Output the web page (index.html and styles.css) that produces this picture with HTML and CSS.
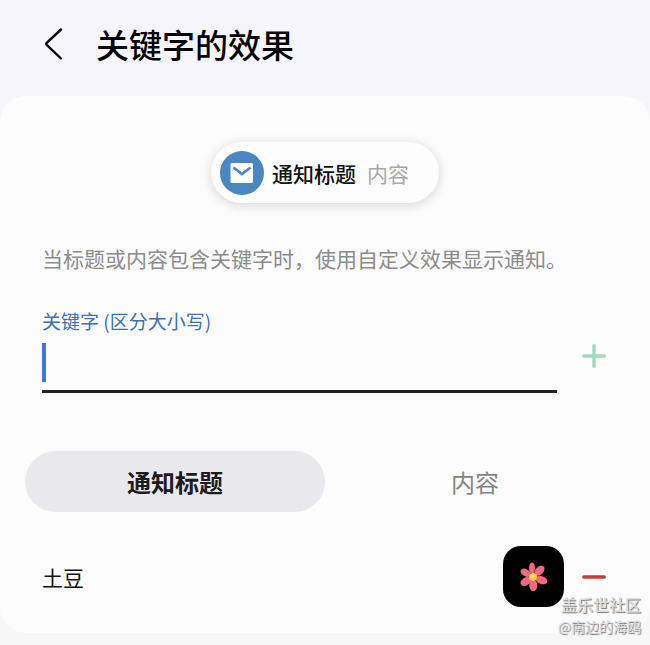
FILE: index.html
```html
<!DOCTYPE html>
<html lang="zh-CN">
<head>
    <meta charset="UTF-8">
    <meta name="viewport" content="width=device-width, initial-scale=1.0">
    <title>关键字的效果</title>
    <link rel="stylesheet" href="styles.css">
</head>
<body>
    <header class="header">
        <button class="back" type="button" aria-label="返回">
            <svg width="20" height="34" viewBox="0 0 20 34" fill="none" stroke="#0a0a0a" stroke-width="2.4" stroke-linecap="round" stroke-linejoin="round">
                <path d="M18 2.500 3.700 15.800q-1 1 0 2L18 31.500"/>
            </svg>
        </button>
        <h1>关键字的效果</h1>
    </header>

    <main class="card">
        <!-- Notification preview -->
        <div class="preview">
            <svg class="preview-icon" viewBox="0 0 44 44">
                <circle cx="22" cy="22" r="22" fill="#4a86bf"/>
                <rect x="10.500" y="12" width="22.500" height="20" rx="1.500" fill="#fff"/>
                <path d="M13.500 16.500 22 23l8.500-6.500" fill="none" stroke="#4a86bf" stroke-width="2.600"/>
            </svg>
            <strong>通知标题</strong>
            <span>内容</span>
        </div>

        <p class="description">当标题或内容包含关键字时，使用自定义效果显示通知。</p>

        <form class="keyword-form">
            <div class="field">
                <label for="keyword">关键字 (区分大小写)</label>
                <input id="keyword" type="text" autocomplete="off">
            </div>
            <button class="icon-button add" type="button" aria-label="添加">
                <svg width="24" height="24" viewBox="0 0 24 24" stroke="#a3d7c0" stroke-width="3.4" stroke-linecap="round">
                    <path d="M12 1.800v20.400M1.800 12h20.400"/>
                </svg>
            </button>
        </form>

        <div class="tabs">
            <button class="tab active" type="button">通知标题</button>
            <button class="tab" type="button">内容</button>
        </div>

        <ul class="keywords">
            <li>
                <span class="keyword">土豆</span>
                <button class="effect" type="button" aria-label="效果">
                    <svg width="30" height="30" viewBox="-14 -15 30 30">
                        <g fill="#f4697f">
                            <ellipse cx="-1" cy="-9" rx="3" ry="5.500"/>
                            <ellipse cx="0" cy="-9" rx="3.900" ry="6" transform="rotate(46)"/>
                            <ellipse cx="0" cy="-9" rx="3.900" ry="6.200" transform="rotate(110)"/>
                            <ellipse cx="0" cy="-8.500" rx="4" ry="5.800" transform="rotate(178)"/>
                            <ellipse cx="0" cy="-8.500" rx="3.900" ry="5.700" transform="rotate(238)"/>
                            <ellipse cx="0" cy="-8.500" rx="3.600" ry="5.500" transform="rotate(300)"/>
                        </g>
                        <circle r="4" fill="#f5cf3c"/>
                        <circle cx="-1" cy="-1" r="2" fill="#fbe36a"/>
                    </svg>
                </button>
                <button class="icon-button" type="button" aria-label="删除">
                    <svg width="24" height="24" viewBox="0 0 24 24" stroke="#c93b38" stroke-width="3.4" stroke-linecap="round">
                        <path d="M1.800 12h20.400"/>
                    </svg>
                </button>
            </li>
        </ul>
    </main>

    <div class="watermark">
        <b>盖乐世社区</b>
        <span>@南边的海鸥</span>
    </div>
</body>
</html>
```
FILE: styles.css
```css
* {
    box-sizing: border-box;
}

body {
    margin: 0;
    padding-bottom: 12px;
    position: relative; /* Required for the watermark */
    background: linear-gradient(#f6f5fb 96px, #f7f7f7 130px);
    color: #111;
    font-family: "Noto Sans CJK SC", sans-serif;
    font-size: 21px;
}

button {
    padding: 0;
    border: none;
    background: none;
    font: inherit;
    cursor: pointer;
}

svg {
    display: block;
}

.header {
    display: flex;
    align-items: center;
    gap: 33px;
    height: 96px;
    padding: 0 42px 9px 43px;
}

.header h1 {
    margin: 0;
    font-size: 33px;
    font-weight: 500;
    line-height: 48px;
    color: #000;
}

.card {
    padding: 46px 25px 26px;
    background: #fcfcfc;
    border-radius: 26px;
}

/* Notification preview */
.preview {
    display: flex;
    align-items: center;
    width: fit-content;
    height: 61px;
    margin: 0 auto;
    padding: 0 30px 0 9px;
    border-radius: 31px;
    background: #fdfdfd;
    box-shadow: 0 2px 12px rgba(0, 0, 0, 0.16);
}

.preview-icon {
    width: 44px;
    height: 44px;
    margin-right: 8px;
}

.preview strong {
    margin-right: 11px;
    font-weight: 500;
}

.preview span {
    color: #a8a8a8;
}

.description {
    margin: 40px 17px 34px;
    line-height: 30px;
    color: #8c8c8c;
}

/* Keyword input */
.keyword-form {
    display: flex;
    align-items: flex-end;
    gap: 25px;
    padding: 0 19px 0 17px;
}

.field {
    flex: 1;
}

.field label {
    display: block;
    font-size: 19px;
    line-height: 28px;
    color: #3c71ae;
}

.field input {
    display: block;
    width: 100%;
    height: 58px;
    padding: 0 10px;
    border: none;
    border-bottom: 3px solid #1f2220;
    outline: none;
    font: inherit;
    background: linear-gradient(#4177d8, #4177d8) 0 8px / 4px 39px no-repeat;
}

.icon-button.add {
    height: 74px;
}

/* Tabs */
.tabs {
    display: flex;
    margin-top: 58px;
}

.tab {
    flex: 1;
    height: 61px;
    border-radius: 31px;
    font-size: 24px;
    color: #858585;
}

.tab.active {
    background: #e9e8ec;
    color: #1c1c20;
    font-weight: 700;
}

/* Keyword list */
.keywords {
    list-style: none;
    margin: 34px 0 0;
    padding: 0 19px 0 17px;
}

.keywords li {
    display: flex;
    align-items: center;
    gap: 18px;
}

.keyword {
    flex: 1;
}

.effect {
    display: grid;
    place-items: center;
    width: 61px;
    height: 61px;
    border-radius: 18px;
    background: #000;
}

.watermark {
    position: absolute;
    right: 9px;
    bottom: 8px;
    text-align: right;
    line-height: 22px;
    color: #dcdcdc;
    text-shadow: 1px 1px 1px #777;
}

.watermark b,
.watermark span {
    display: block;
}

.watermark b {
    font-size: 16px;
    font-weight: 500;
}

.watermark span {
    font-size: 14px;
}
```
